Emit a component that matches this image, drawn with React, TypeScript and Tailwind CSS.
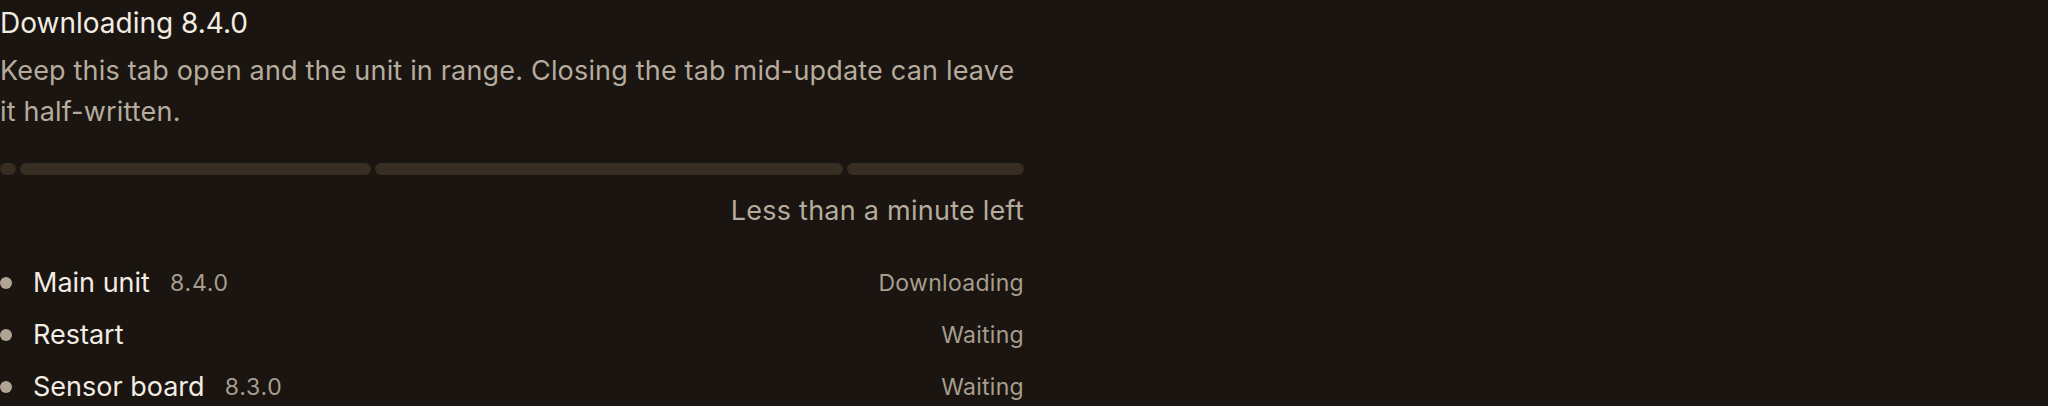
import React from "react";

const segments = [16, 351, 468, 0];

const rows = [
  { label: "Main unit", version: "8.4.0", status: "Downloading" },
  { label: "Restart", version: "", status: "Waiting" },
  { label: "Sensor board", version: "8.3.0", status: "Waiting" },
];

export default function App() {
  return (
    <div
      className="w-[2048px] h-[406px] overflow-hidden bg-[#1a1511]"
      style={{ fontFamily: "Inter, 'Noto Sans', sans-serif" }}
    >
      <div className="w-[1024px] flex flex-col">
        <h1 className="text-[28px] leading-[44px] font-normal text-[#f2ece3] mt-[1px]">
          Downloading 8.4.0
        </h1>
        <p className="text-[27px] leading-[41px] text-[#b6ab9c] tracking-[0.18px] mt-[5px]">
          Keep this tab open and the unit in range. Closing the tab mid-update can leave it half-written.
        </p>
        <div className="flex gap-[4px] h-[12px] mt-[31px]">
          {segments.map((w, i) => (
            <div
              key={i}
              className={`h-full rounded-full bg-[#382d22] ${i === segments.length - 1 ? "flex-1" : ""}`}
              style={i === segments.length - 1 ? undefined : { width: w }}
            />
          ))}
        </div>
        <div className="text-right text-[27px] leading-[40px] text-[#b6ab9c] tracking-[0.25px] mt-[16px]">
          Less than a minute left
        </div>
        <ul className="mt-[26px] flex flex-col">
          {rows.map((r) => (
            <li key={r.label} className="flex items-center h-[52px]">
              <span className="w-[12px] h-[12px] rounded-full bg-[#b0a595] shrink-0" />
              <span className="ml-[21px] text-[27px] text-[#f2ece3]">{r.label}</span>
              {r.version && (
                <span className="ml-[20px] text-[23px] text-[#a89d8e] tracking-[0.8px]">{r.version}</span>
              )}
              <span className="ml-auto text-[23px] text-[#a89d8e] tracking-[0.3px]">{r.status}</span>
            </li>
          ))}
        </ul>
      </div>
    </div>
  );
}
